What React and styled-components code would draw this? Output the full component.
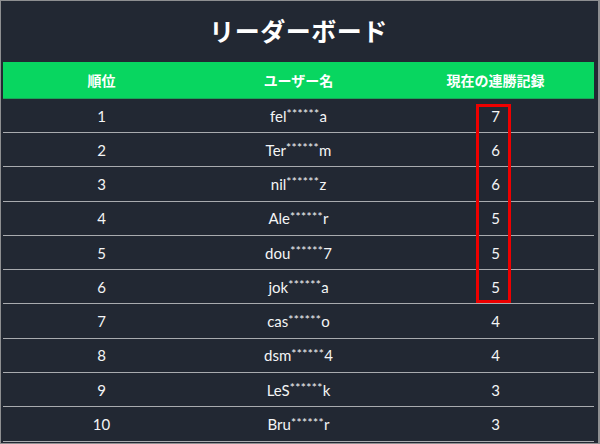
import React from 'react';
import styled, {createGlobalStyle} from 'styled-components';

const GlobalStyle = createGlobalStyle`
  html, body {
    margin: 0;
    padding: 0;
    background: #222833;
  }
  * {
    box-sizing: border-box;
  }
`;

const Frame = styled.div`
  position: relative;
  width: 600px;
  height: 444px;
  overflow: hidden;
  background: #222833;
  border: 1px solid #8e8f91;
  border-right-width: 2px;
  padding: 0 4px 0 2px;
  font-family: Lato, 'Noto Sans CJK JP', sans-serif;
  color: #ffffff;
`;

const Title = styled.h1`
  margin: 0;
  height: 61px;
  display: flex;
  align-items: center;
  justify-content: center;
  font-family: 'Noto Sans CJK JP', sans-serif;
  font-size: 25px;
  font-weight: 700;
  letter-spacing: 0.5px;
  padding-bottom: 4px;
`;

const Table = styled.div`
  display: grid;
  grid-template-columns: repeat(3, 1fr);
`;

const HeadCell = styled.div`
  height: 37px;
  display: flex;
  align-items: center;
  justify-content: center;
  background: #08d660;
  border-bottom: 1px solid #18a658;
  font-family: 'Noto Sans CJK JP', sans-serif;
  font-size: 14px;
  font-weight: 700;
  color: #ffffff;
`;

const Cell = styled.div`
  height: ${p => (p.$first ? '34px' : '34.3px')};
  display: flex;
  align-items: center;
  justify-content: center;
  border-bottom: 1px solid #a9abaf;
  font-size: 15px;
  color: #f4f5f6;
`;

const Mask = styled.span`
  font-size: 12px;
  letter-spacing: 0.4px;
  position: relative;
  top: -2px;
`;

const Highlight = styled.div`
  position: absolute;
  left: 475px;
  top: 103px;
  width: 35px;
  height: 199px;
  border: 3px solid #ee0000;
  pointer-events: none;
`;

const rows = [
  ['1', 'fel', 'a', '7'],
  ['2', 'Ter', 'm', '6'],
  ['3', 'nil', 'z', '6'],
  ['4', 'Ale', 'r', '5'],
  ['5', 'dou', '7', '5'],
  ['6', 'jok', 'a', '5'],
  ['7', 'cas', 'o', '4'],
  ['8', 'dsm', '4', '4'],
  ['9', 'LeS', 'k', '3'],
  ['10', 'Bru', 'r', '3'],
];

export default function App() {
  return (
    <>
      <GlobalStyle/>
      <Frame>
        <Title>リーダーボード</Title>
        <Table>
          <HeadCell>順位</HeadCell>
          <HeadCell>ユーザー名</HeadCell>
          <HeadCell>現在の連勝記録</HeadCell>
          {rows.map(([rank, head, tail, streak], i) => (
            <React.Fragment key={rank}>
              <Cell $first={i === 0}>{rank}</Cell>
              <Cell $first={i === 0}>
                {head}<Mask>******</Mask>{tail}
              </Cell>
              <Cell $first={i === 0}>{streak}</Cell>
            </React.Fragment>
          ))}
        </Table>
        <Highlight/>
      </Frame>
    </>
  );
}
